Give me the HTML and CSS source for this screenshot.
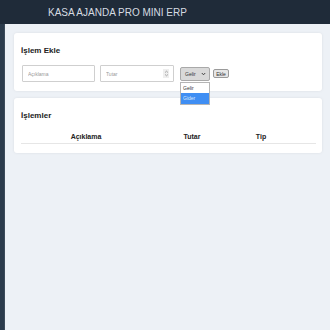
FILE: index.html
```html
<!DOCTYPE html>
<html lang="tr">
<head>
    <meta charset="UTF-8">
    <meta name="viewport" content="width=device-width, initial-scale=1.0">
    <title>Kasa Ajanda Pro Mini ERP</title>
    <link rel="stylesheet" href="styles.css">
</head>
<body>
    <header>
        <h1>KASA AJANDA PRO MINI ERP</h1>
    </header>

    <div class="layout">
        <aside class="sidebar"></aside>

        <main>
            <section class="card">
                <h2>İşlem Ekle</h2>
                <div class="form-row">
                    <input type="text" class="field" placeholder="Açıklama">
                    <span class="number-wrap">
                        <input type="text" class="field" placeholder="Tutar">
                        <span class="spinner">
                            <svg width="5" height="7" viewBox="0 0 5 7"><path d="M1 2.6 L2.5 1.2 L4 2.6 M1 4.4 L2.5 5.8 L4 4.4" fill="none" stroke="#888" stroke-width="0.7"/></svg>
                        </span>
                    </span>
                    <div class="select-wrap">
                        <div class="select">
                            <span>Gelir</span>
                            <svg width="5" height="4" viewBox="0 0 5 4"><path d="M0.8 1 L2.5 2.8 L4.2 1" fill="none" stroke="#333" stroke-width="0.9"/></svg>
                        </div>
                        <ul class="dropdown">
                            <li>Gelir</li>
                            <li class="active">Gider</li>
                        </ul>
                    </div>
                    <button>Ekle</button>
                </div>
            </section>

            <section class="card">
                <h2>İşlemler</h2>
                <table>
                    <thead>
                        <tr>
                            <th class="col-desc">Açıklama</th>
                            <th class="col-amount">Tutar</th>
                            <th class="col-type">Tip</th>
                            <th class="col-action"></th>
                        </tr>
                    </thead>
                    <tbody id="islemler"></tbody>
                </table>
            </section>
        </main>
    </div>
</body>
</html>
```

FILE: styles.css
```css
* { box-sizing: border-box; }
html, body {
    height: 100%;
}
body {
    margin: 0;
    font-family: "Liberation Sans", Arial, sans-serif;
    background: #edf1f6;
    display: flex;
    flex-direction: column;
}
header {
    background: #1f2b39;
    height: 24px;
    display: flex;
    align-items: center;
    padding-left: 48px;
}
header h1 {
    margin: 0;
    font-size: 10px;
    font-weight: normal;
    color: #d6dbe1;
}
.layout {
    flex: 1;
    display: flex;
}
.sidebar {
    width: 5px;
    background: #2b3b4c;
    border-right: 1px solid #3c4b5a;
}
main {
    flex: 1;
    padding: 9px 8px 0 9px;
}
.card {
    background: white;
    border-radius: 3px;
    box-shadow: 0 0 3px rgba(0,0,0,0.08);
    padding: 13px 6px 9px 7px;
    margin-bottom: 7px;
}
.card h2 {
    margin: 0 0 9px 0;
    font-size: 8px;
    line-height: 10px;
    color: #222;
}
.form-row {
    display: flex;
    align-items: center;
    padding-left: 1px;
}
.field {
    width: 73px;
    height: 17px;
    border: 1px solid #cfcfcf;
    border-radius: 1px;
    padding: 0 5px;
    font-size: 5px;
    font-family: inherit;
    margin-right: 5px;
}
.field::placeholder { color: #999; }
.number-wrap {
    position: relative;
    display: flex;
    margin-right: 1px;
}
.number-wrap .field { width: 74px; }
.spinner {
    position: absolute;
    right: 10px;
    top: 4px;
    width: 6px;
    height: 9px;
    background: #eee;
    display: flex;
    align-items: center;
    justify-content: center;
}
.select-wrap {
    position: relative;
    margin-right: 3px;
}
.select {
    width: 30px;
    height: 14px;
    background: #d9d9d9;
    border: 1px solid #a9a9a9;
    border-radius: 2px;
    display: flex;
    align-items: center;
    justify-content: space-between;
    padding: 0 3px 0 4px;
    font-size: 5px;
    color: #333;
}
.dropdown {
    position: absolute;
    top: 15px;
    left: 0;
    width: 30px;
    margin: 0;
    padding: 0;
    list-style: none;
    background: white;
    border: 1px solid #b5b5b5;
    font-size: 5px;
}
.dropdown li {
    height: 10.5px;
    line-height: 10.5px;
    padding-left: 2px;
    color: #333;
}
.dropdown li.active {
    background: #3f8ef3;
    color: #dce9fb;
}
button {
    height: 9px;
    width: 16px;
    padding: 0;
    font-size: 5px;
    font-family: inherit;
    background: #e6e6e6;
    border: 1px solid #9a9a9a;
    border-radius: 2px;
    color: #333;
}
table {
    width: 100%;
    border-collapse: collapse;
}
th {
    font-size: 7px;
    line-height: 9px;
    padding: 2px 0;
    color: #222;
    border-bottom: 1px solid #e6e6e6;
}
.col-desc { width: 130px; }
.col-amount { width: 82px; }
.col-type { width: 56px; }
```
